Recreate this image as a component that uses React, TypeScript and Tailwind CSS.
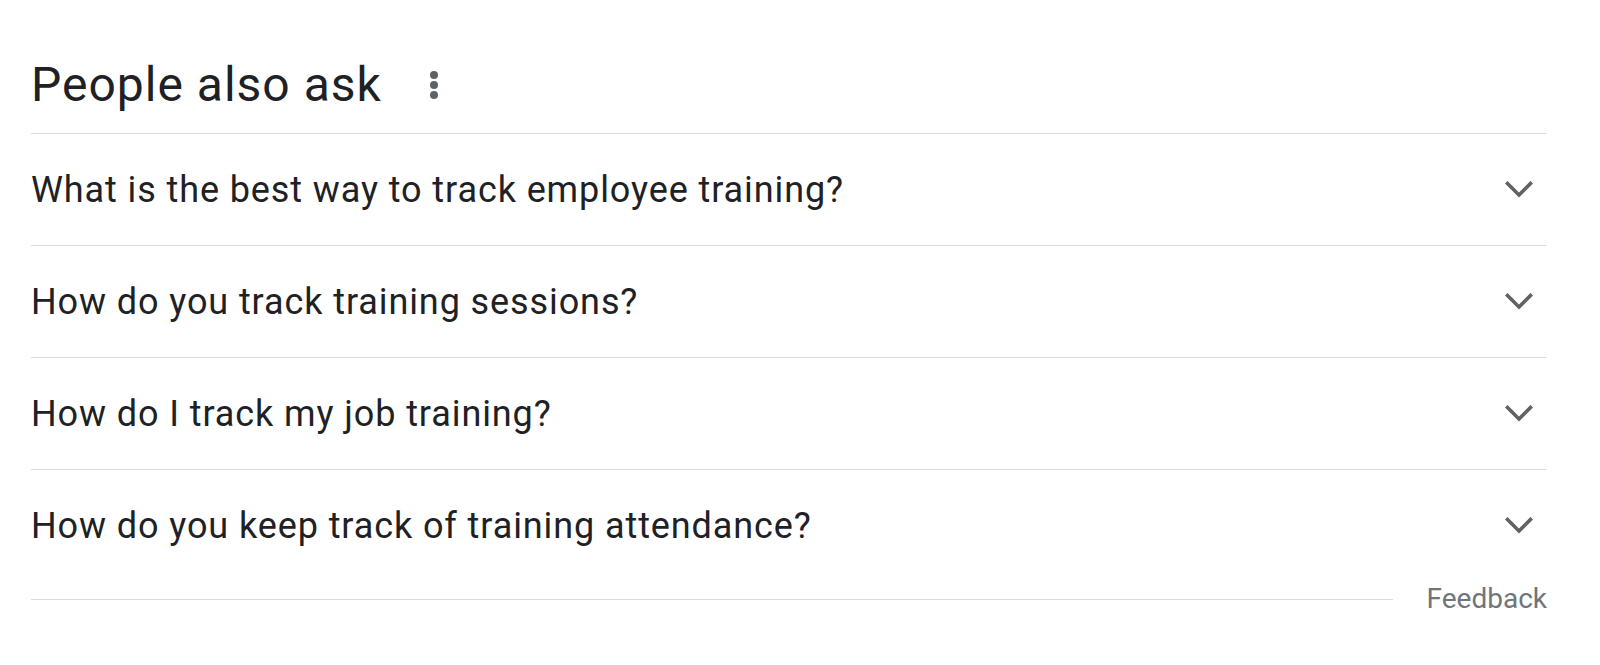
const questions = [
  "What is the best way to track employee training?",
  "How do you track training sessions?",
  "How do I track my job training?",
  "How do you keep track of training attendance?",
];

function MoreDots() {
  return (
    <svg width="10" height="28" viewBox="0 0 10 28" className="text-[#5f6368]">
      <circle cx="5" cy="4" r="4" fill="currentColor" />
      <circle cx="5" cy="14" r="4" fill="currentColor" />
      <circle cx="5" cy="24" r="4" fill="currentColor" />
    </svg>
  );
}

function Chevron() {
  return (
    <svg width="28" height="18" viewBox="0 0 28 18" className="text-[#5f6368]">
      <path
        d="M2.5 2.5 L14 14 L25.5 2.5"
        fill="none"
        stroke="currentColor"
        strokeWidth="3.6"
        strokeLinecap="square"
      />
    </svg>
  );
}

export default function App() {
  return (
    <div className="min-h-screen bg-white pl-[31px] pr-[53px] font-['Roboto',sans-serif] text-[#202124]">
      <div className="flex h-[134px] items-center gap-[47px] border-b border-[#dadce0] pt-[36px]">
        <h2 className="text-[48px] leading-none tracking-[1px]">People also ask</h2>
        <MoreDots />
      </div>

      {questions.map((q, i) => (
        <div
          key={q}
          className={
            i < questions.length - 1
              ? "flex h-[112px] items-center justify-between border-b border-[#dadce0] pr-[14px]"
              : "flex h-[112px] items-center justify-between pr-[14px]"
          }
        >
          <span className="text-[36px] leading-none tracking-[0.9px]">{q}</span>
          <Chevron />
        </div>
      ))}

      <div className="flex h-[34px] items-center gap-[34px]">
        <div className="h-px flex-1 bg-[#dadce0]" />
        <span className="text-[28px] leading-none text-[#70757a]">Feedback</span>
      </div>
    </div>
  );
}
